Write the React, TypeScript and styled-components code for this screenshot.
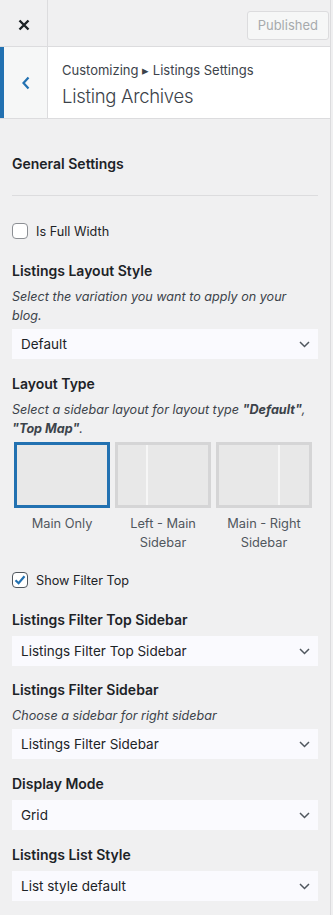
import React from 'react';
import styled, { createGlobalStyle } from 'styled-components';

const GlobalStyle = createGlobalStyle`
  html, body { margin: 0; padding: 0; background: #f0f0f1; }
  body { font-family: Inter, "Noto Sans", sans-serif; -webkit-font-smoothing: antialiased; }
  * { box-sizing: border-box; }
`;

const Sidebar = styled.div`
  width: 331px;
  min-height: 915px;
  background: #f0f0f1;
  border-right: 1px solid #dcdcde;
`;

const Header = styled.header`
  display: flex;
  align-items: center;
  height: 47px;
  border-bottom: 1px solid #dcdcde;
`;

const CloseButton = styled.button`
  width: 48px;
  height: 46px;
  padding: 3px 0 0;
  border: 0;
  border-right: 1px solid #dcdcde;
  background: transparent;
  display: flex;
  align-items: center;
  justify-content: center;
`;

const Spacer = styled.div`
  flex: 1;
`;

const PublishButton = styled.button`
  height: 29px;
  margin: 4px 1px 0 0;
  padding: 0 10px;
  border: 1px solid #dcdcde;
  border-radius: 3px;
  background: #f6f7f7;
  color: #a7aaad;
  font-family: Inter, "Noto Sans", sans-serif;
  font-size: 13px;
  line-height: 1;
`;

const TitleSection = styled.div`
  display: flex;
  height: 72px;
  background: #fff;
  border-bottom: 1px solid #dcdcde;
`;

const BackButton = styled.button`
  width: 48px;
  height: 100%;
  padding: 0;
  border: 0;
  border-left: 4px solid #2271b1;
  border-right: 1px solid #dcdcde;
  background: #f6f7f7;
  display: flex;
  align-items: center;
  justify-content: center;
`;

const TitleText = styled.div`
  padding: 13px 0 0 14px;
`;

const Breadcrumb = styled.div`
  font-size: 13px;
  line-height: 20px;
  color: #3c434a;
`;

const SectionTitle = styled.h2`
  margin: 3px 0 0;
  font-size: 18.5px;
  line-height: 26px;
  letter-spacing: -0.3px;
  font-weight: 300;
  color: #3c434a;
`;

const Content = styled.div`
  padding: 35px 12px 20px;
`;

const GroupTitle = styled.h3`
  margin: 0 0 21px;
  font-size: 14px;
  line-height: 20px;
  font-weight: 600;
  color: #1d2327;
`;

const Divider = styled.hr`
  height: 1px;
  margin: 0 0 25px;
  border: 0;
  background: #dcdcde;
`;

const Control = styled.div<{ $space: number }>`
  margin-bottom: ${(p) => p.$space}px;
`;

const ControlTitle = styled.div`
  margin-bottom: 6px;
  font-size: 14px;
  line-height: 20px;
  font-weight: 600;
  color: #1d2327;
`;

const Description = styled.div`
  margin-bottom: 4px;
  font-size: 12.6px;
  line-height: 19px;
  font-style: italic;
  color: #3c434a;
  b { font-weight: 700; }
`;

const CheckRow = styled.label`
  display: flex;
  align-items: center;
  gap: 8px;
  height: 20px;
  font-size: 12.7px;
  color: #1d2327;
`;

const CheckBox = styled.span<{ $checked?: boolean }>`
  width: 16px;
  height: 16px;
  border: 1px solid ${(p) => (p.$checked ? '#50575e' : '#8c8f94')};
  border-radius: 4px;
  background: #fff;
  display: flex;
  align-items: center;
  justify-content: center;
`;

const SelectBox = styled.div`
  display: flex;
  align-items: center;
  justify-content: space-between;
  height: 30px;
  padding: 0 8px 0 9px;
  background: #fafafe;
  font-size: 13.5px;
  color: #1d2327;
`;

const LayoutRow = styled.div`
  display: flex;
  gap: 5px;
  padding-left: 2px;
`;

const LayoutItem = styled.div`
  width: 96px;
  display: flex;
  flex-direction: column;
  align-items: center;
`;

const LayoutImage = styled.div<{ $selected?: boolean }>`
  width: 100%;
  height: 66px;
  border: 3px solid ${(p) => (p.$selected ? '#2271b1' : '#d5d5d6')};
  background: #e8e8e8;
  display: flex;
`;

const LayoutPart = styled.div<{ $grow: number }>`
  flex: ${(p) => p.$grow};
  background: #e8e8e8;
`;

const PartSep = styled.div`
  width: 2px;
  background: #f6f6f6;
`;

const LayoutLabel = styled.div`
  margin-top: 6px;
  font-size: 12.8px;
  line-height: 19px;
  text-align: center;
  color: #50575e;
`;

const Chevron = () => (
  <svg width="11" height="7" viewBox="0 0 11 7">
    <polyline points="1,1 5.5,5.5 10,1" fill="none" stroke="#50575e" strokeWidth="1.5" />
  </svg>
);

const Select = ({ value }: { value: string }) => (
  <SelectBox role="listbox">
    <span>{value}</span>
    <Chevron />
  </SelectBox>
);

const Check = ({ checked, label }: { checked?: boolean; label: string }) => (
  <CheckRow>
    <CheckBox $checked={checked}>
      {checked && (
        <svg width="14" height="14" viewBox="0 0 14 14">
          <polyline points="2.5,7.2 5.6,10.2 11.5,3.2" fill="none" stroke="#2271b1" strokeWidth="2.2" />
        </svg>
      )}
    </CheckBox>
    {label}
  </CheckRow>
);

export default function App() {
  return (
    <>
      <GlobalStyle />
      <Sidebar>
        <Header>
          <CloseButton aria-label="Close">
            <svg width="12" height="12" viewBox="0 0 12 12">
              <path d="M1.5 1.5 L10.5 10.5 M10.5 1.5 L1.5 10.5" stroke="#1d2327" strokeWidth="2.4" />
            </svg>
          </CloseButton>
          <Spacer />
          <PublishButton disabled>Published</PublishButton>
        </Header>
        <TitleSection>
          <BackButton aria-label="Back">
            <svg width="10" height="14" viewBox="0 0 10 14">
              <polyline points="7.5,1.5 2.5,7 7.5,12.5" fill="none" stroke="#2271b1" strokeWidth="2.2" />
            </svg>
          </BackButton>
          <TitleText>
            <Breadcrumb>Customizing ▸ Listings Settings</Breadcrumb>
            <SectionTitle>Listing Archives</SectionTitle>
          </TitleText>
        </TitleSection>
        <Content>
          <GroupTitle>General Settings</GroupTitle>
          <Divider />
          <Control $space={20}>
            <Check label="Is Full Width" />
          </Control>
          <Control $space={15}>
            <ControlTitle>Listings Layout Style</ControlTitle>
            <Description>Select the variation you want to apply on your blog.</Description>
            <Select value="Default" />
          </Control>
          <Control $space={18}>
            <ControlTitle>Layout Type</ControlTitle>
            <Description>
              Select a sidebar layout for layout type <b>"Default"</b>, <b>"Top Map"</b>.
            </Description>
            <LayoutRow>
              <LayoutItem>
                <LayoutImage $selected>
                  <LayoutPart $grow={1} />
                </LayoutImage>
                <LayoutLabel>Main Only</LayoutLabel>
              </LayoutItem>
              <LayoutItem>
                <LayoutImage>
                  <LayoutPart $grow={28} />
                  <PartSep />
                  <LayoutPart $grow={59} />
                </LayoutImage>
                <LayoutLabel>Left - Main<br />Sidebar</LayoutLabel>
              </LayoutItem>
              <LayoutItem>
                <LayoutImage>
                  <LayoutPart $grow={59} />
                  <PartSep />
                  <LayoutPart $grow={29} />
                </LayoutImage>
                <LayoutLabel>Main - Right<br />Sidebar</LayoutLabel>
              </LayoutItem>
            </LayoutRow>
          </Control>
          <Control $space={20}>
            <Check checked label="Show Filter Top" />
          </Control>
          <Control $space={14}>
            <ControlTitle>Listings Filter Top Sidebar</ControlTitle>
            <Select value="Listings Filter Top Sidebar" />
          </Control>
          <Control $space={15}>
            <ControlTitle>Listings Filter Sidebar</ControlTitle>
            <Description>Choose a sidebar for right sidebar</Description>
            <Select value="Listings Filter Sidebar" />
          </Control>
          <Control $space={15}>
            <ControlTitle>Display Mode</ControlTitle>
            <Select value="Grid" />
          </Control>
          <Control $space={14}>
            <ControlTitle>Listings List Style</ControlTitle>
            <Select value="List style default" />
          </Control>
        </Content>
      </Sidebar>
    </>
  );
}
